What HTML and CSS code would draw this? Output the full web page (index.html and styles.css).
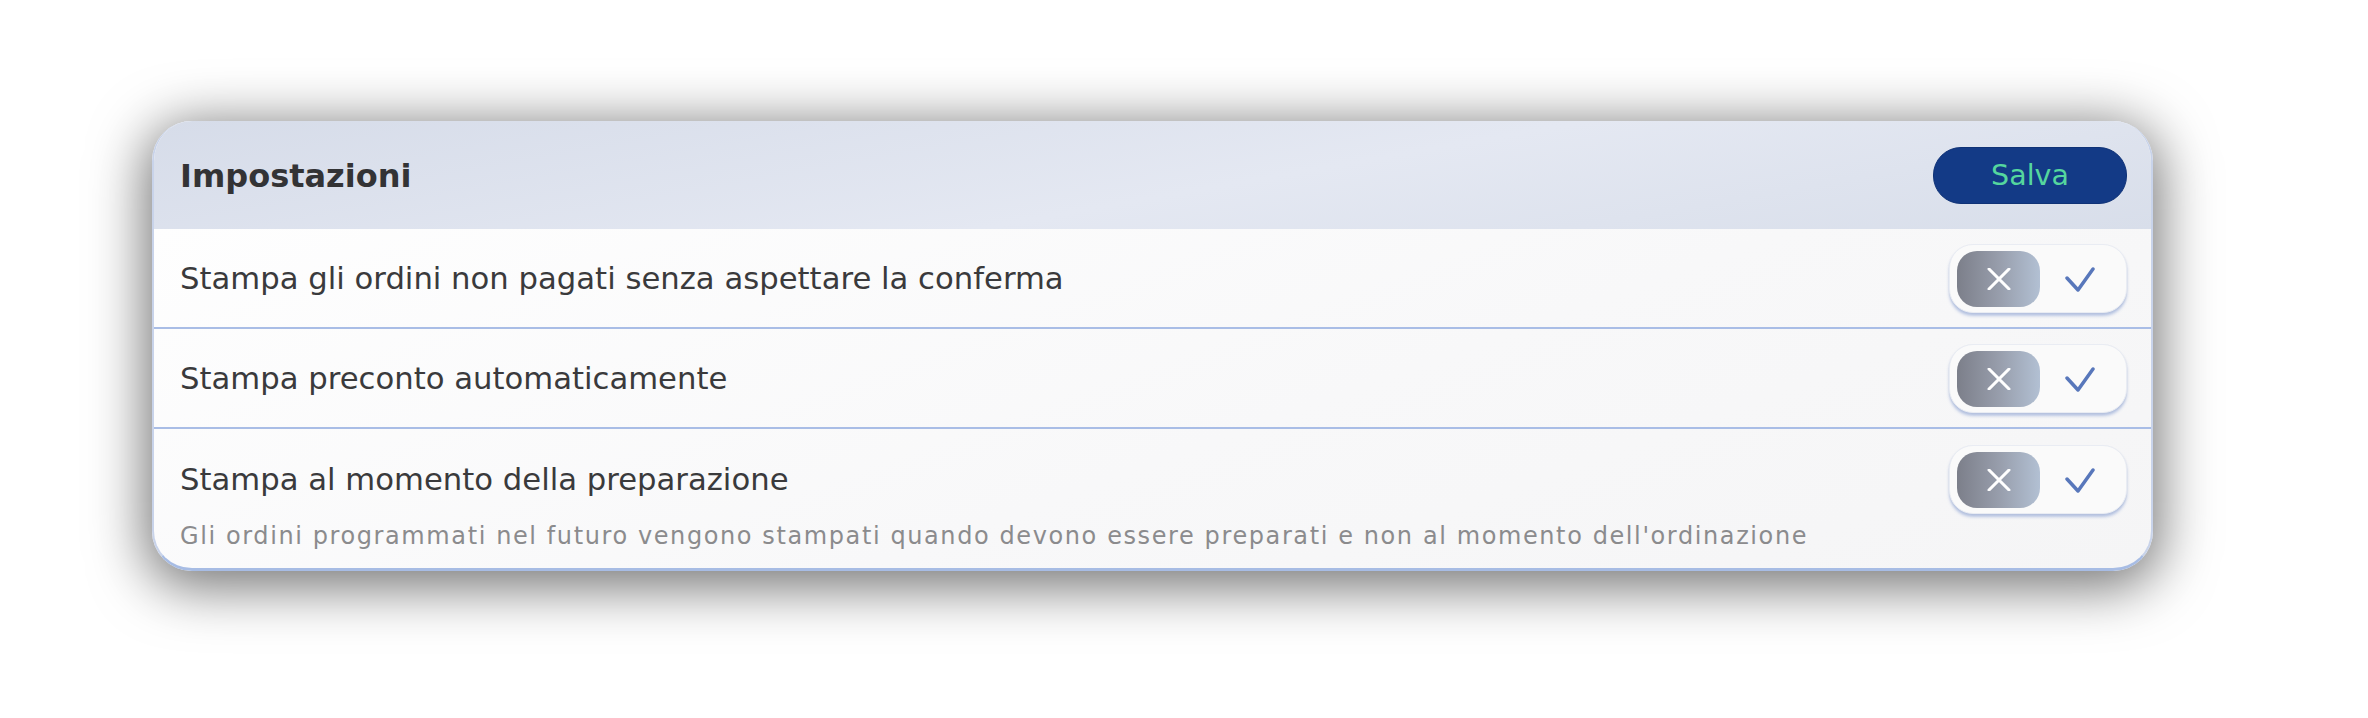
FILE: index.html
```html
<!DOCTYPE html>
<html lang="it">
<head>
<meta charset="utf-8">
<title>Impostazioni</title>
<link rel="stylesheet" href="styles.css">
</head>
<body>
<div class="stage">
  <section class="card">
    <header class="card-header">
      <h1 class="title">Impostazioni</h1>
      <button class="save-btn">Salva</button>
    </header>
    <div class="rows">
      <div class="row">
        <div class="row-main">
          <span class="label">Stampa gli ordini non pagati senza aspettare la conferma</span>
          <div class="toggle">
            <span class="knob">
              <svg width="24" height="22" viewBox="0 0 24 22"><path d="M2 1 L22 21 M22 1 L2 21" stroke="#fff" stroke-width="3" stroke-linecap="round" fill="none"/></svg>
            </span>
            <span class="check">
              <svg width="30" height="26" viewBox="0 0 30 26"><path d="M2 11 L13 23 L28 2" stroke="#5877bb" stroke-width="3.5" stroke-linecap="round" stroke-linejoin="round" fill="none"/></svg>
            </span>
          </div>
        </div>
      </div>
      <div class="row">
        <div class="row-main">
          <span class="label">Stampa preconto automaticamente</span>
          <div class="toggle">
            <span class="knob">
              <svg width="24" height="22" viewBox="0 0 24 22"><path d="M2 1 L22 21 M22 1 L2 21" stroke="#fff" stroke-width="3" stroke-linecap="round" fill="none"/></svg>
            </span>
            <span class="check">
              <svg width="30" height="26" viewBox="0 0 30 26"><path d="M2 11 L13 23 L28 2" stroke="#5877bb" stroke-width="3.5" stroke-linecap="round" stroke-linejoin="round" fill="none"/></svg>
            </span>
          </div>
        </div>
      </div>
      <div class="row row-last">
        <div class="row-main">
          <span class="label">Stampa al momento della preparazione</span>
          <div class="toggle">
            <span class="knob">
              <svg width="24" height="22" viewBox="0 0 24 22"><path d="M2 1 L22 21 M22 1 L2 21" stroke="#fff" stroke-width="3" stroke-linecap="round" fill="none"/></svg>
            </span>
            <span class="check">
              <svg width="30" height="26" viewBox="0 0 30 26"><path d="M2 11 L13 23 L28 2" stroke="#5877bb" stroke-width="3.5" stroke-linecap="round" stroke-linejoin="round" fill="none"/></svg>
            </span>
          </div>
        </div>
        <p class="desc">Gli ordini programmati nel futuro vengono stampati quando devono essere preparati e non al momento dell'ordinazione</p>
      </div>
    </div>
  </section>
</div>
</body>
</html>
```
FILE: styles.css
```css
* { box-sizing: border-box; }
html, body {
  margin: 0;
  padding: 0;
  background: #ffffff;
}
body {
  font-family: "DejaVu Sans", "Open Sans", sans-serif;
  color: #3a3a3c;
  width: 2368px;
  height: 718px;
  overflow: hidden;
}
.stage {
  padding: 121px 0 0 152px;
}
.card {
  width: 2001px;
  border-radius: 40px;
  overflow: hidden;
  border-left: 2px solid #c8d3ea;
  border-right: 2px solid #c8d3ea;
  border-bottom: 3px solid #a7bce4;
  background: linear-gradient(160deg, #ffffff 0%, #f8f8f9 60%, #f5f5f6 100%);
  box-shadow: 0 10px 55px 6px rgba(0, 0, 0, 0.55);
}
.card-header {
  height: 108px;
  display: flex;
  align-items: center;
  justify-content: space-between;
  padding: 0 24px 0 26px;
  background: linear-gradient(170deg, #d6dce9 0%, #e4e8f2 55%, #d8deea 100%);
}
.title {
  margin: 2px 0 0;
  font-size: 32px;
  font-weight: 700;
  color: #333335;
}
.save-btn {
  width: 194px;
  height: 57px;
  border: 1px solid #0f3276;
  border-radius: 28px;
  background: #133a86;
  color: #55d69e;
  font-family: inherit;
  font-size: 28.5px;
  font-weight: 400;
  padding: 0;
}
.row {
  padding: 15px 24px 14px 26px;
  border-bottom: 2px solid #a9bde6;
}
.row-last {
  border-bottom: none;
  padding-top: 16px;
  padding-bottom: 15px;
}
.row-main {
  display: flex;
  align-items: center;
  justify-content: space-between;
}
.label {
  font-size: 30.7px;
  color: #3a3a3c;
}
.toggle {
  width: 178px;
  height: 69px;
  display: flex;
  align-items: center;
  padding: 0 7px;
  border-radius: 24px;
  background: #fafafa;
  border: 1px solid #e9ecf3;
  box-shadow: 0 3px 3px rgba(110, 140, 205, 0.45), 0 1px 2px rgba(0,0,0,0.05);
}
.knob {
  width: 83px;
  height: 56px;
  border-radius: 20px;
  display: flex;
  align-items: center;
  justify-content: center;
  background: linear-gradient(90deg, #7c7f8a 0%, #979dab 50%, #b2c0d3 100%);
}
.check {
  flex: 1;
  display: flex;
  align-items: center;
  justify-content: center;
  padding-top: 2px;
}
.desc {
  margin: 5px 0 0;
  font-size: 24px;
  letter-spacing: 1.6px;
  line-height: 34px;
  color: #8b8b8d;
}
```
